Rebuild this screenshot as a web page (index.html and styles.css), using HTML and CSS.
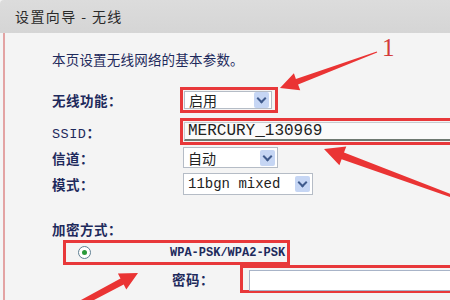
FILE: index.html
```html
<!DOCTYPE html>
<html lang="zh">
<head>
    <meta charset="UTF-8">
    <title>设置向导 - 无线</title>
    <link rel="stylesheet" href="styles.css">
</head>
<body>
    <div class="header">设置向导 - 无线</div>

    <div class="panel">
        <p class="intro">本页设置无线网络的基本参数。</p>

        <div class="row row-switch">
            <span class="label">无线功能：</span>
            <div class="mark mark-switch">
                <div class="select select-switch"><span>启用</span><i class="arrow"></i></div>
            </div>
        </div>

        <div class="row row-ssid">
            <span class="label"><span class="mono">SSID</span>：</span>
            <div class="mark mark-ssid">
                <div class="input input-ssid">MERCURY_130969</div>
            </div>
        </div>

        <div class="row row-channel">
            <span class="label">信道：</span>
            <div class="select select-channel"><span>自动</span><i class="arrow"></i></div>
        </div>

        <div class="row row-mode">
            <span class="label">模式：</span>
            <div class="select select-mode"><span class="mono">11bgn mixed</span><i class="arrow"></i></div>
        </div>

        <div class="encrypt-title">加密方式：</div>

        <div class="mark mark-radio">
            <span class="radio"><span class="dot"></span></span>
            <span class="radio-text">WPA-PSK/WPA2-PSK</span>
        </div>

        <div class="pw-row">
            <span class="pw-label">密码：</span>
            <div class="mark mark-pw">
                <div class="input input-pw"></div>
            </div>
        </div>
    </div>

    <!-- arrows drawn over the screenshot -->
    <svg class="overlay" width="450" height="300" viewBox="0 0 450 300">
        <polygon points="280,88 300.2,90.2 298.1,84.5 377.2,52.5 376.8,51.5 295.9,78.9 293.9,73.2" />
        <polygon points="324,149 339.4,165.3 341.6,159.2 451.5,197.4 452.5,194.6 344,152.6 346.3,146.5" />
        <polygon points="138,273 126.3,289.4 123.7,284.6 79.4,307.6 76.6,302.4 120.5,278.4 117.9,273.6" />
    </svg>
    <span class="num">1</span>
</body>
</html>
```

FILE: styles.css
```css
/* CSS */
html, body {
    margin: 0;
    padding: 0;
    width: 450px;
    height: 300px;
    overflow: hidden;
}

body {
    position: relative;
    background-color: #f4f4f4;
    font-family: "Noto Sans CJK SC", "DejaVu Sans", sans-serif;
    color: #1e2a5c;
}

.mono {
    font-family: "Liberation Mono", monospace;
}

.header {
    height: 33px;
    line-height: 33px;
    padding-left: 15px;
    background: linear-gradient(#dcdcdc, #d5d5d5);
    border-top-left-radius: 4px;
    font-size: 14px;
    color: #2a2a2a;
    letter-spacing: 1.4px;
}

.panel {
    margin-left: 3px;
    border-left: 2px solid #e3a3a3;
    padding-left: 47px;
    height: 267px;
}

.intro {
    margin: 0;
    padding-top: 17px;
    font-size: 13.5px;
    line-height: 18px;
    letter-spacing: 0.2px;
}

.row {
    display: grid;
    grid-template-columns: 128px auto;
    align-items: center;
    font-size: 13.5px;
}

.label {
    font-weight: bold;
    letter-spacing: 0.5px;
}

.label .mono {
    font-weight: normal;
}

.row-switch {
    margin-top: 19px;
    height: 26px;
}

.row-ssid {
    margin-top: 5px;
    height: 27px;
}

.row-channel {
    margin-top: 2px;
    height: 21px;
}

.row-mode {
    margin-top: 5px;
    height: 22px;
}

.mark {
    border: 3px solid #e8383a;
    box-sizing: border-box;
    padding: 1px;
}

.mark-switch {
    width: 98px;
    height: 26px;
}

.mark-ssid {
    width: 300px;
    height: 27px;
}

.select {
    display: flex;
    align-items: center;
    justify-content: space-between;
    background-color: #fff;
    border: 1px solid #b5bcc6;
    box-sizing: border-box;
    padding: 0 2px 0 4px;
    font-size: 14px;
    color: #222;
}

.select-switch {
    width: 88px;
    height: 18px;
}

.select-channel {
    width: 95px;
    height: 21px;
    margin-left: 3px;
}

.select-mode {
    width: 130px;
    height: 22px;
    margin-left: 3px;
}

.select-mode .mono {
    font-size: 14px;
}

.arrow {
    width: 15px;
    height: 16px;
    background-color: #c6d6f4;
    border-radius: 2px;
    position: relative;
}

.arrow::after {
    content: "";
    position: absolute;
    left: 4px;
    top: 3px;
    width: 5px;
    height: 5px;
    border-right: 2px solid #3f5a8c;
    border-bottom: 2px solid #3f5a8c;
    transform: rotate(45deg);
}

.input {
    background-color: #fafafa;
    border: 1px solid #c8ccd0;
    border-bottom: 2px solid #6f7a72;
    box-sizing: border-box;
}

.input-ssid {
    height: 19px;
    line-height: 17px;
    padding-left: 3px;
    font-family: "Liberation Mono", monospace;
    font-size: 16px;
    color: #222;
}

.encrypt-title {
    margin-top: 25px;
    font-size: 13.5px;
    font-weight: bold;
    line-height: 18px;
    letter-spacing: 0.5px;
}

.mark-radio {
    display: flex;
    align-items: center;
    width: 227px;
    height: 25px;
    margin-top: 2px;
    margin-left: 11px;
    padding: 0;
}

.radio {
    flex-shrink: 0;
    width: 11px;
    height: 11px;
    border: 1px solid #5f7f92;
    border-radius: 50%;
    background-color: #fff;
    margin-left: 12px;
    display: flex;
    align-items: center;
    justify-content: center;
}

.dot {
    width: 5px;
    height: 5px;
    border-radius: 50%;
    background-color: #2a9a3a;
}

.radio-text {
    margin-left: 79px;
    white-space: nowrap;
    font-family: "Liberation Mono", monospace;
    font-size: 12px;
    font-weight: bold;
    color: #1e2a5c;
}

.pw-row {
    display: flex;
    align-items: center;
    padding-left: 120px;
    height: 28px;
}

.pw-label {
    flex-shrink: 0;
    width: 68px;
    font-size: 13.5px;
    font-weight: bold;
    letter-spacing: 0.5px;
}

.mark-pw {
    flex-shrink: 0;
    width: 240px;
    height: 28px;
    padding: 2px 0 0 6px;
}

.input-pw {
    height: 21px;
    background-color: #fff;
    border: 1px solid #a8b4c8;
}

.overlay {
    position: absolute;
    left: 0;
    top: 0;
    fill: #ea3434;
}

.num {
    position: absolute;
    left: 382px;
    top: 34px;
    font-family: "Liberation Serif", serif;
    font-size: 25px;
    color: #d33a3a;
}
```
